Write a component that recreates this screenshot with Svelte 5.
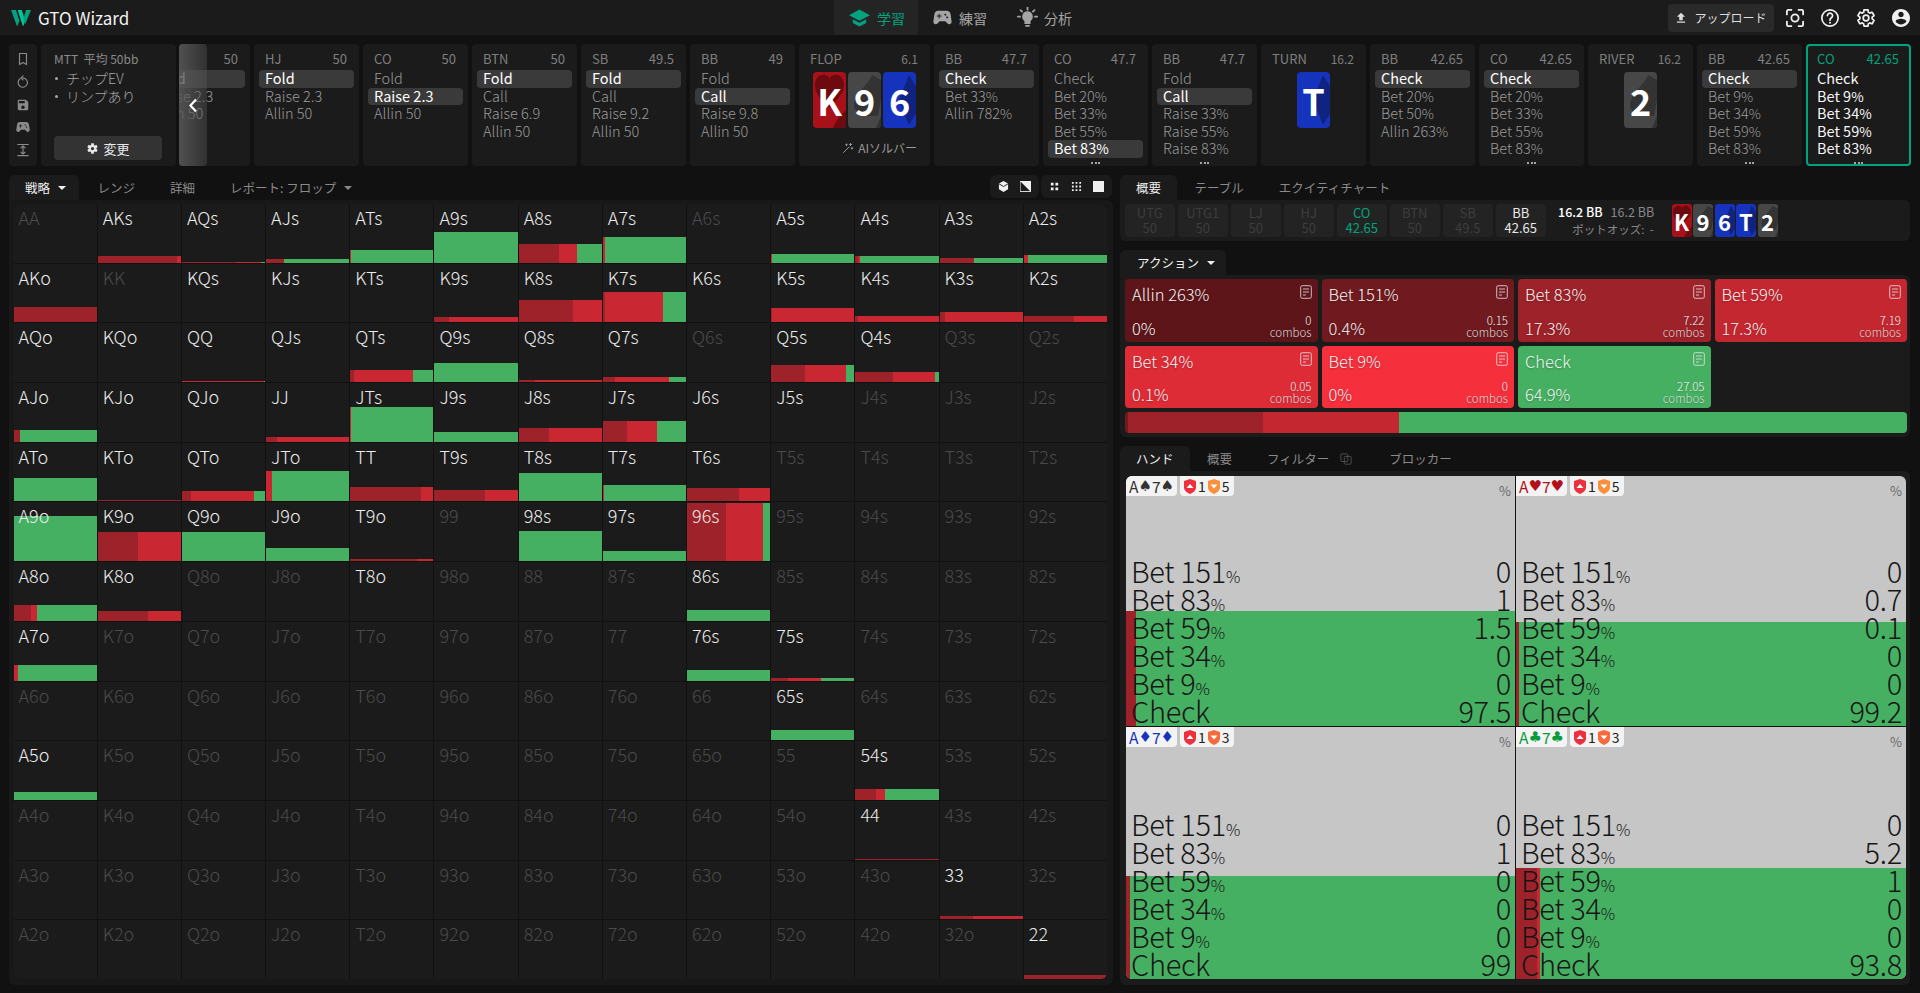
<script>
  const ranks = 'AKQJT98765432'.split('');
  const bars = {
    AKs:[7,95,5,0],AQs:[1,65,30,5],AJs:[4,21,0,79],ATs:[13,0,1,99],A9s:[31,0,0,100],A8s:[19,48,22,30],A7s:[26,0,2,98],A5s:[9,0,1,99],A4s:[7,3,2,95],A3s:[5,41,0,59],A2s:[8,0,5,95],
    AKo:[15,100,0,0],K9s:[5,17,83,0],K8s:[22,65,35,0],K7s:[30,2,70,28],K5s:[14,1,99,0],K4s:[6,3,97,0],K3s:[10,6,94,0],K2s:[6,60,40,0],
    QQ:[1,0,99,1],QTs:[12,5,71,24],Q9s:[19,0,0,100],Q8s:[2,20,80,0],Q7s:[5,15,65,20],Q5s:[17,41,49,10],Q4s:[10,45,51,4],
    AJo:[12,8,0,92],JJ:[5,13,87,0],JTs:[35,0,1,99],J9s:[10,0,0,100],J8s:[14,36,64,0],J7s:[21,29,36,35],
    ATo:[23,0,1,99],KTo:[1,100,0,0],QTo:[10,11,76,13],JTo:[30,0,7,93],TT:[14,85,15,0],T9s:[11,61,39,0],T8s:[28,0,0,100],T7s:[16,0,1,99],T6s:[13,63,37,0],
    A9o:[45,0,0,100],K9o:[29,49,51,0],Q9o:[29,0,0,100],J9o:[13,0,0,100],T9o:[2,80,20,0],'98s':[30,0,0,100],'97s':[10,0,0,100],'96s':[58,47,44,9],
    A8o:[16,21,7,72],K8o:[10,61,39,0],'86s':[11,0,0,100],
    A7o:[16,0,5,95],'76s':[11,0,0,100],'75s':[3,20,40,40],
    '65s':[10,0,0,100],A5o:[8,0,0,100],'54s':[11,25,10,65],'44':[1,100,0,0],'33':[3,40,60,0],'22':[4,100,0,0]
  };
  const active = new Set(['KQs','KJs','KTs','K6s','AQo','KQo','QJs','KJo','QJo','J6s','J5s','T8o']);
  const cells = [];
  ranks.forEach((a, i) => ranks.forEach((b, j) => {
    const label = i === j ? a + b : i < j ? a + b + 's' : b + a + 'o';
    const bar = bars[label];
    cells.push({ label, bar, dim: !bar && !active.has(label) });
  }));

  const splitPct = (t) => t.endsWith('%') ? [t.slice(0, -1), '%'] : [t, ''];
  const nodes = [
    { pos:'', stack:'50', rows:['Fold','Raise 2.3','Allin 50'], sel:[0], cut:true },
    { pos:'HJ', stack:'50', rows:['Fold','Raise 2.3','Allin 50'], sel:[0] },
    { pos:'CO', stack:'50', rows:['Fold','Raise 2.3','Allin 50'], sel:[1] },
    { pos:'BTN', stack:'50', rows:['Fold','Call','Raise 6.9','Allin 50'], sel:[0] },
    { pos:'SB', stack:'49.5', rows:['Fold','Call','Raise 9.2','Allin 50'], sel:[0] },
    { pos:'BB', stack:'49', rows:['Fold','Call','Raise 9.8','Allin 50'], sel:[1] },
    { street:'FLOP', stack:'6.1', cards:[['K','h'],['9','s'],['6','d']], ai:true },
    { pos:'BB', stack:'47.7', rows:['Check','Bet 33%','Allin 782%'], sel:[0] },
    { pos:'CO', stack:'47.7', rows:['Check','Bet 20%','Bet 33%','Bet 55%','Bet 83%'], sel:[4], more:true },
    { pos:'BB', stack:'47.7', rows:['Fold','Call','Raise 33%','Raise 55%','Raise 83%'], sel:[1], more:true },
    { street:'TURN', stack:'16.2', cards:[['T','d']] },
    { pos:'BB', stack:'42.65', rows:['Check','Bet 20%','Bet 50%','Allin 263%'], sel:[0] },
    { pos:'CO', stack:'42.65', rows:['Check','Bet 20%','Bet 33%','Bet 55%','Bet 83%'], sel:[0], more:true },
    { street:'RIVER', stack:'16.2', cards:[['2','s']] },
    { pos:'BB', stack:'42.65', rows:['Check','Bet 9%','Bet 34%','Bet 59%','Bet 83%'], sel:[0], more:true },
    { pos:'CO', stack:'42.65', rows:['Check','Bet 9%','Bet 34%','Bet 59%','Bet 83%'], sel:[], more:true, current:true }
  ];
  const seats = [['UTG','50'],['UTG1','50'],['LJ','50'],['HJ','50'],['CO','42.65','on'],['BTN','50'],['SB','49.5'],['BB','42.65','me']];
  const board = [['K','h'],['9','s'],['6','d'],['T','d'],['2','s']];
  const actions = [
    ['Allin 263%','0%','0','a1'],['Bet 151%','0.4%','0.15','a2'],['Bet 83%','17.3%','7.22','a3'],['Bet 59%','17.3%','7.19','a4'],
    ['Bet 34%','0.1%','0.05','a5'],['Bet 9%','0%','0','a6'],['Check','64.9%','27.05','a7']
  ];
  const stack = [['a2',0.4],['a3',17.3],['a4',17.3],['a5',0.1],['a7',64.9]];
  const lines = ['Bet 151%','Bet 83%','Bet 59%','Bet 34%','Bet 9%','Check'];
  const hands = [
    { r:'A', k:'7', suit:'♠', tone:'ts', up:1, down:5, warm:false, vals:['0','1','1.5','0','0','97.5'], h:115, d:10, m:0 },
    { r:'A', k:'7', suit:'♥', tone:'th', up:1, down:5, warm:false, vals:['0','0.7','0.1','0','0','99.2'], h:104, d:3, m:0 },
    { r:'A', k:'7', suit:'♦', tone:'td', up:1, down:3, warm:true, vals:['0','1','0','0','0','99'], h:103, d:4, m:0 },
    { r:'A', k:'7', suit:'♣', tone:'tc', up:1, down:3, warm:true, vals:['0','5.2','1','0','0','93.8'], h:111, d:21, m:3 }
  ];
  const gear = 'M19.14 12.94c.04-.3.06-.61.06-.94 0-.32-.02-.64-.07-.94l2.03-1.58c.18-.14.23-.41.12-.61l-1.92-3.32c-.12-.22-.37-.29-.59-.22l-2.39.96c-.5-.38-1.03-.7-1.62-.94L14.4 2.81c-.04-.24-.24-.41-.48-.41h-3.84c-.24 0-.43.17-.47.41L9.25 5.35c-.59.24-1.13.57-1.62.94l-2.39-.96c-.22-.08-.47 0-.59.22L2.74 8.87c-.12.21-.08.47.12.61l2.03 1.58c-.05.3-.09.63-.09.94s.02.64.07.94l-2.03 1.58c-.18.14-.23.41-.12.61l1.92 3.32c.12.22.37.29.59.22l2.39-.96c.5.38 1.03.7 1.62.94l.36 2.54c.05.24.24.41.48.41h3.84c.24 0 .44-.17.47-.41l.36-2.54c.59-.24 1.13-.56 1.62-.94l2.39.96c.22.08.47 0 .59-.22l1.92-3.32c.12-.22.07-.47-.12-.61l-2.01-1.58z';
  const pad = 'M21.58 16.09l-1.09-7.66C20.21 6.46 18.52 5 16.53 5H7.47C5.48 5 3.79 6.46 3.51 8.43l-1.09 7.66C2.2 17.63 3.39 19 4.94 19c.68 0 1.32-.27 1.8-.75L9 16h6l2.25 2.25c.48.48 1.13.75 1.8.75 1.56 0 2.75-1.37 2.53-2.91zM11 11H9v2H8v-2H6v-1h2V8h1v2h2v1zm4-1c-.55 0-1-.45-1-1s.45-1 1-1 1 .45 1 1-.45 1-1 1zm2 3c-.55 0-1-.45-1-1s.45-1 1-1 1 .45 1 1-.45 1-1 1z';
</script>

{#snippet suitArt(s)}
  <svg class="art" viewBox="0 0 33 56" preserveAspectRatio="none" aria-hidden="true">
    {#if s === 'h'}
      <path d="M16 36 C8 27 2 22 2 13 C2 6 7 2 12 3 C15 3.500 16 5 16.500 7 C17 5 19 3 22 3 C27 2 31 7 31 13 C31 22 24 27 16 36Z"/>
      <path d="M33 56 L20 56 C22 50 27 44 33 38Z"/>
    {:else if s === 's'}
      <path d="M24 3 C21 12 6 22 6 33 C6 41 14 42 20 38 C19 41 17 43 15 44 L30 44 L33 28 L33 8Z"/>
      <path d="M33 44 L28 56 L33 56Z"/>
    {:else}
      <path d="M26 3 L33 14 L33 42 L26 53 L16 28Z"/>
    {/if}
  </svg>
{/snippet}

{#snippet shield(fill, up)}
  <svg class="shield" viewBox="0 0 12 15" aria-hidden="true">
    <path d="M6 0 L12 2 L12 8.500 C12 11.500 9 13.700 6 15 C3 13.700 0 11.500 0 8.500 L0 2Z" fill={fill}/>
    {#if up}<path d="M2.500 9 L6 5 L9.500 9Z" fill="#fff"/>{:else}<path d="M2.500 5.500 L9.500 5.500 L6 9.500Z" fill="#fff"/>{/if}
  </svg>
{/snippet}

{#snippet note()}
  <svg class="note" viewBox="0 0 12 14" aria-hidden="true">
    <rect x="0.700" y="0.700" width="10.600" height="12.600" rx="1.500"/>
    <path d="M3 4H9M3 7H9M3 10H6"/>
  </svg>
{/snippet}

<div class="app">
  <header class="top">
    <div class="brand">
      <svg class="logo" viewBox="0 0 24 20" aria-hidden="true">
        <path d="M0 1H6L10 14L8 20H7Z" fill="#00a37e"/>
        <path d="M8 1H13L17 14L15 20H14Z" fill="#00c49a"/>
        <path d="M24 1H18L15 11L17 18Z" fill="#00a37e"/>
      </svg>
      <span>GTO Wizard</span>
    </div>
    <nav class="nav">
      <div class="navitem on">
        <svg viewBox="1 3 22 18" aria-hidden="true"><path d="M5 13.180v4L12 21l7-3.820v-4L12 17l-7-3.820zM12 3L1 9l11 6 11-6L12 3z"/></svg>
        <span>学習</span>
      </div>
      <div class="navitem">
        <svg class="wide" viewBox="2 5 20 14" aria-hidden="true"><path d={pad}/></svg>
        <span>練習</span>
      </div>
      <div class="navitem bulb">
        <svg viewBox="0 0 24 24" aria-hidden="true">
          <path d="M9.500 22.500h5v-1.800h-5zM12 5a6 6 0 0 0-3.500 10.900V19.500h7v-3.600A6 6 0 0 0 12 5z"/>
          <path class="rays" d="M12 0.500v2.500M4 3.500l1.800 1.800M20 3.500l-1.800 1.800M1 11h2.500M20.500 11H23"/>
        </svg>
        <span>分析</span>
      </div>
    </nav>
    <div class="tools">
      <button class="upload">
        <svg viewBox="0 0 24 24" aria-hidden="true"><path d="M9 16h6v-6h4l-7-7-7 7h4zm-4 2h14v2H5z"/></svg>
        <span>アップロード</span>
      </button>
      <svg class="tool" viewBox="2 2 20 20" aria-hidden="true"><path class="ln" d="M3 8V4.500A1.500 1.500 0 0 1 4.500 3H8M16 3h3.500A1.500 1.500 0 0 1 21 4.500V8M21 16v3.500a1.500 1.500 0 0 1-1.500 1.500H16M8 21H4.500A1.500 1.500 0 0 1 3 19.500V16"/><circle class="ln" cx="12" cy="12" r="4"/></svg>
      <svg class="tool" viewBox="1.500 1.500 21 21" aria-hidden="true"><circle class="ln" cx="12" cy="12" r="9.500"/><path class="ln" d="M9 9.200a3 3 0 1 1 4.600 2.600c-1 .6-1.600 1.300-1.600 2.700"/><circle cx="12" cy="17.500" r="1.200"/></svg>
      <svg class="tool" viewBox="1.500 1.500 21 21" aria-hidden="true"><path class="ln" d={gear}/><circle class="ln" cx="12" cy="12" r="3.300"/></svg>
      <svg class="tool" viewBox="2 2 20 20" aria-hidden="true"><path d="M12 2C6.480 2 2 6.480 2 12s4.480 10 10 10 10-4.480 10-10S17.520 2 12 2zm0 3c1.660 0 3 1.340 3 3s-1.340 3-3 3-3-1.340-3-3 1.340-3 3-3zm0 14.200c-2.500 0-4.710-1.280-6-3.220.03-1.990 4-3.080 6-3.080 1.990 0 5.970 1.090 6 3.080-1.290 1.940-3.500 3.220-6 3.220z"/></svg>
    </div>
  </header>

  <section class="strip">
    <div class="rail">
      <svg viewBox="0 0 24 24" aria-hidden="true"><path class="ln" d="M6 2.500h12v19l-6-3.500-6 3.500z"/></svg>
      <svg viewBox="0 0 24 24" aria-hidden="true"><path class="ln" d="M7 6.500a8 8 0 1 0 5-1.500M12 1.500l-3.500 3.500L12 8.500"/></svg>
      <svg viewBox="0 0 24 24" aria-hidden="true"><path d="M17 3H5c-1.110 0-2 .9-2 2v14c0 1.100.89 2 2 2h14c1.100 0 2-.9 2-2V7l-4-4zm-5 16c-1.660 0-3-1.340-3-3s1.340-3 3-3 3 1.340 3 3-1.340 3-3 3zm3-10H5V5h10v4z"/></svg>
      <svg viewBox="2 5 20 14" aria-hidden="true"><path d={pad}/></svg>
      <svg viewBox="0 0 24 24" aria-hidden="true"><path class="ln" d="M3 2.500h18M3 21.500h18M12 5v14M8.500 8.500L12 5l3.500 3.500M8.500 15.500L12 19l3.500-3.500"/></svg>
    </div>
    <div class="mtt">
      <div class="mtt-title">MTT&nbsp; 平均 50bb</div>
      <ul>
        <li>チップEV</li>
        <li>リンプあり</li>
      </ul>
      <button class="change">
        <svg viewBox="0 0 24 24" aria-hidden="true"><path d={gear}/><circle cx="12" cy="12" r="3" fill="#333"/></svg>
        <span>変更</span>
      </button>
    </div>
    <div class="tree">
      {#each nodes as n}
        <div class="node" class:cut={n.cut} class:flop={n.ai} class:current={n.current}>
          <div class="node-head">
            <span>{n.pos ?? n.street}</span>
            <span class:small={n.street}>{n.stack}</span>
          </div>
          {#if n.rows}
            <div class="rows">
              {#each n.rows as r, i}
                <div class="row" class:sel={n.sel.includes(i)}>{splitPct(r)[0]}<small>{splitPct(r)[1]}</small></div>
              {/each}
            </div>
            {#if n.more}<div class="dots"><i></i><i></i><i></i></div>{/if}
          {:else}
            <div class="cards">
              {#each n.cards as c}
                <div class="pcard {c[1]}">{@render suitArt(c[1])}<b>{c[0]}</b></div>
              {/each}
            </div>
            {#if n.ai}
              <div class="ai">
                <svg viewBox="0 0 24 24" aria-hidden="true"><path class="ln" d="M3 21L14 10M17 3v4M15 5h4M20 11v3M18.500 12.500h3M9 4v3M7.500 5.500h3"/></svg>
                <span>AIソルバー</span>
              </div>
            {/if}
          {/if}
        </div>
      {/each}
      <div class="back">
        <svg viewBox="0 0 12 20" aria-hidden="true"><path d="M9.500 3L3 10l6.500 7"/></svg>
      </div>
    </div>
  </section>

  <main class="main">
    <section class="left">
      <div class="tabbar">
        <div class="tab on">戦略<em></em></div>
        <div class="tab">レンジ</div>
        <div class="tab">詳細</div>
        <div class="tab">レポート: フロップ<em></em></div>
        <div class="views">
          <div class="vgroup">
            <svg viewBox="0 0 12 12" aria-hidden="true"><path d="M6 0L11 2.800V9L6 12L1 9V2.800Z"/><path class="cut-ln" d="M1 3L6 6L11 3"/></svg>
            <svg viewBox="0 0 12 12" aria-hidden="true"><path d="M0 0H12V12Z"/><path class="ln thin" d="M.5.500h11v11H.5z"/></svg>
          </div>
          <div class="vgroup">
            <svg viewBox="0 0 12 12" aria-hidden="true"><path d="M2 2H5V5H2ZM7 2H10V5H7ZM2 7H5V10H2ZM7 7H10V10H7Z"/></svg>
            <svg viewBox="0 0 12 12" aria-hidden="true"><path d="M1 1H3V3H1ZM5 1H7V3H5ZM9 1H11V3H9ZM1 5H3V7H1ZM5 5H7V7H5ZM9 5H11V7H9ZM1 9H3V11H1ZM5 9H7V11H5ZM9 9H11V11H9Z"/></svg>
            <svg viewBox="0 0 12 12" aria-hidden="true"><path d="M0 0H12V12H0Z"/></svg>
          </div>
        </div>
      </div>
      <div class="panel">
        <div class="grid">
          {#each cells as c}
            <div class="cell" class:dim={c.dim}>
              {#if c.bar}
                <div class="bar" style="height:{c.bar[0]}px">
                  <i class="dark" style="width:{c.bar[1]}%"></i><i class="red" style="width:{c.bar[2]}%"></i><i class="green" style="width:{c.bar[3]}%"></i>
                </div>
              {/if}
              <span>{c.label}</span>
            </div>
          {/each}
        </div>
      </div>
    </section>

    <section class="right">
      <div class="tabbar">
        <div class="tab on">概要</div>
        <div class="tab">テーブル</div>
        <div class="tab">エクイティチャート</div>
      </div>
      <div class="seatbar">
        {#each seats as s}
          <div class="seat {s[2] ?? ''}"><span>{s[0]}</span><span>{s[1]}</span></div>
        {/each}
        <div class="pot">
          <div><b>16.2 BB</b><span>16.2 BB</span></div>
          <p>ポットオッズ: &nbsp;-</p>
        </div>
        <div class="board">
          {#each board as c}
            <div class="pcard mini {c[1]}">{@render suitArt(c[1])}<b>{c[0]}</b></div>
          {/each}
        </div>
      </div>

      <div class="tabbar short">
        <div class="tab on wide-tab">アクション<em></em></div>
      </div>
      <div class="actions">
        <div class="agrid">
          {#each actions as a}
            <div class="acard {a[3]}">
              <div class="a-top"><span>{a[0]}</span>{@render note()}</div>
              <div class="a-bot">
                <span class="a-pct">{a[1]}</span>
                <span class="a-c"><b>{a[2]}</b><small>combos</small></span>
              </div>
            </div>
          {/each}
        </div>
        <div class="stack">
          {#each stack as s}<i class={s[0]} style="width:{s[1]}%"></i>{/each}
        </div>
      </div>

      <div class="tabbar short">
        <div class="tab on">ハンド</div>
        <div class="tab">概要</div>
        <div class="tab">フィルター
          <svg class="copy" viewBox="0 0 14 14" aria-hidden="true"><rect x="1" y="1" width="8" height="9" rx="1"/><rect x="5" y="4" width="8" height="9" rx="1"/></svg>
        </div>
        <div class="tab">ブロッカー</div>
      </div>
      <div class="handpanel">
        <div class="hgrid">
          {#each hands as h}
            <div class="hand">
              <div class="fill" style="height:{h.h}px">
                <i class="dark" style="width:{h.d}px"></i><i class="red" style="width:{h.m}px"></i><i class="green grow"></i>
              </div>
              <div class="badges">
                <div class="badge {h.tone}">{h.r}<span>{h.suit}</span>{h.k}<span>{h.suit}</span></div>
                <div class="badge eq">
                  {@render shield('#ee2f3d', true)}<span>{h.up}</span>
                  {@render shield(h.warm ? '#f66a3c' : '#fb8f3c', false)}<span>{h.down}</span>
                </div>
                <div class="hpct">%</div>
              </div>
              <div class="hlines">
                {#each lines as l, i}
                  <div class="hline">
                    <span>{splitPct(l)[0]}<small>{splitPct(l)[1]}</small></span>
                    <span>{h.vals[i]}</span>
                  </div>
                {/each}
              </div>
            </div>
          {/each}
        </div>
      </div>
    </section>
  </main>
</div>

<style>
  :global(body) { margin: 0; background: #111; }
  .app {
    width: 1920px; height: 993px; overflow: hidden; background: #111; color: #fff;
    font-family: "Noto Sans CJK JP", "Noto Sans", sans-serif; display: flex; flex-direction: column;
  }
  svg { display: block; fill: currentColor; }
  svg .ln, svg.ln { fill: none; stroke: currentColor; stroke-width: 2; stroke-linecap: round; stroke-linejoin: round; }
  button { font-family: inherit; border: 0; color: inherit; padding: 0; }

  .top { height: 35px; background: #1b1b1b; display: flex; align-items: center; position: relative; flex: none; }
  .brand { display: flex; align-items: center; gap: 7px; margin-left: 11px; font-size: 17px; font-weight: 400; color: #f2f2f2; width: 823px; }
  .logo { width: 20px; height: 17px; }
  .nav { display: flex; height: 35px; }
  .navitem { display: flex; align-items: center; gap: 7px; font-size: 14px; color: #a5a5a5; padding: 0 15px; }
  .navitem svg { width: 21px; height: 18px; }
  .navitem svg.wide { width: 19px; height: 15px; }
  .navitem.on { background: #242424; color: #00a37e; padding-right: 13px; }
  .navitem.bulb { gap: 6px; }
  .navitem.bulb svg { height: 21px; }
  .rays { fill: none; stroke: currentColor; stroke-width: 2; stroke-linecap: round; }
  .tools { margin-left: auto; display: flex; align-items: center; margin-right: 10px; }
  .upload { height: 28px; width: 106px; background: #2a2a2a; border-radius: 4px; display: flex; align-items: center; justify-content: center; gap: 6px; font-size: 12px; color: #ddd; margin-right: 12px; }
  .upload svg { width: 14px; height: 14px; }
  .tool { width: 18px; height: 18px; margin-right: 17.500px; color: #f0f0f0; }
  .tool:last-child { margin-right: 0; }

  .strip { display: flex; height: 122px; margin: 9px 9px 0; gap: 4px; flex: none; }
  .rail { width: 28px; background: #1b1b1b; border-radius: 4px; display: flex; flex-direction: column; align-items: center; justify-content: space-between; padding: 8px 0 9px; box-sizing: border-box; color: #8a8a8a; }
  .rail svg { width: 14px; height: 14px; }
  .mtt { width: 135px; background: #1b1b1b; border-radius: 4px; padding: 7px 13px 0; box-sizing: border-box; position: relative; margin-right: -1px; }
  .mtt-title { font-size: 12px; color: #8a8a8a; line-height: 16px; }
  .mtt ul { margin: 3px 0 0; padding: 0; list-style: none; font-size: 14px; font-weight: 300; color: #a5a5a5; line-height: 17.500px; }
  .mtt li { display: flex; align-items: center; }
  .mtt li::before { content: ""; width: 3px; height: 3px; border-radius: 50%; background: #a5a5a5; margin: 0 8px 0 1px; flex: none; }
  .change { position: absolute; left: 13px; right: 14px; bottom: 6px; height: 24px; background: #333; border-radius: 4px; font-size: 13px; display: flex; align-items: center; justify-content: center; gap: 4px; color: #e8e8e8; }
  .change svg { width: 13px; height: 13px; }

  .tree { display: flex; gap: 4px; flex: 1; overflow: hidden; position: relative; }
  .node { width: 105px; flex: none; background: #1b1b1b; border-radius: 4px; box-sizing: border-box; padding: 6px 5px 0; overflow: hidden; }
  .node.cut { margin-left: -34px; }
  .node.flop { width: 131px; }
  .node.current { border: 2px solid #00a37e; padding: 4px 3px 0; }
  .node-head { display: flex; justify-content: space-between; padding: 0 7px 0 6px; height: 18px; line-height: 18px; font-size: 13px; color: #7f7f7f; }
  .node-head .small { font-size: 12px; }
  .current .node-head { color: #00a37e; }
  .rows { margin-top: 2px; }
  .row { height: 17.500px; line-height: 16px; padding-left: 6px; font-size: 14.500px; font-weight: 300; color: #9a9a9a; border-radius: 4px; white-space: nowrap; }
  .row small { font-size: 13.500px; }
  .row.sel { background: #3a3a3a; color: #fff; font-weight: 400; }
  .current .row { color: #f6f6f6; font-weight: 400; }
  .dots { display: flex; gap: 1.500px; justify-content: center; margin-top: 4px; }
  .dots i { width: 2px; height: 2px; background: #a5a5a5; }
  .cards { display: flex; justify-content: center; gap: 2px; margin-top: 4px; height: 56px; }
  .pcard { width: 33px; height: 56px; border-radius: 4px; position: relative; overflow: hidden; display: flex; align-items: center; justify-content: center; }
  .pcard b { position: relative; font-size: 36px; font-weight: 700; color: #fff; line-height: 1; }
  .pcard.h { background: #a8101a; }
  .pcard.s { background: #474747; }
  .pcard.d { background: #1533bd; }
  .art { position: absolute; inset: 0; width: 100%; height: 100%; }
  .h .art { fill: #6d0a10; }
  .s .art { fill: #333; }
  .d .art { fill: #0f2480; }
  .ai { display: flex; align-items: center; justify-content: flex-end; gap: 4px; font-size: 12px; color: #9a9a9a; margin: 11px 8px 0 0; }
  .ai svg { width: 12px; height: 12px; }
  .back { position: absolute; left: 0; top: 0; bottom: 0; width: 28px; border-radius: 4px; background: linear-gradient(90deg, rgba(88,88,88,.88), rgba(85,85,85,.38)); display: flex; align-items: center; justify-content: center; }
  .back svg { width: 12px; height: 17px; fill: none; stroke: #fff; stroke-width: 2.500; }

  .main { display: flex; gap: 7px; margin: 9px 10px 0 9px; flex: 1; min-height: 0; }
  .left { width: 1104px; flex: none; display: flex; flex-direction: column; }
  .right { width: 790px; flex: none; display: flex; flex-direction: column; }
  .tabbar { display: flex; height: 25px; align-items: stretch; font-size: 12.500px; color: #8a8a8a; flex: none; }
  .tab { padding: 0 17.500px; display: flex; align-items: center; border-radius: 6px 6px 0 0; }
  .tab.on { background: #1b1b1b; color: #f0f0f0; padding: 0 16px; }
  .tab.on + .tab { margin-left: 1px; }
  .right > .tabbar .tab.on + .tab { margin-left: 0; }
  .tab.on em { margin-right: -3px; }
  .wide-tab { padding: 0 14px 0 17px !important; }
  .tab em { width: 0; height: 0; border: 4px solid transparent; border-top: 4px solid currentColor; border-bottom: 0; margin-left: 8px; }
  .views { margin-left: auto; display: flex; gap: 2px; margin-right: 1px; height: 23px; }
  .vgroup { background: #1b1b1b; border-radius: 6px; display: flex; align-items: center; gap: 11px; padding: 0 8px; color: #f0f0f0; }
  .vgroup svg { width: 11px; height: 11px; }
  .cut-ln { fill: none; stroke: #1b1b1b; stroke-width: 1; }
  .ln.thin { stroke-width: 1; }
  .panel { background: #181818; border-radius: 0 6px 6px 6px; padding: 4px 6px 6px 4.500px; flex: none; height: 785px; box-sizing: border-box; }
  .grid { display: grid; grid-template-columns: repeat(13, 1fr); grid-template-rows: repeat(13, 1fr); gap: 1px; background: #111; height: 775px; border-radius: 6px; overflow: hidden; }
  .cell { background: #1b1b1b; position: relative; overflow: hidden; min-width: 0; }
  .cell span { position: absolute; left: 5px; top: 0; font-size: 18px; font-weight: 300; line-height: 26px; color: #ececec; }
  .cell.dim span { color: #4a4a4a; }
  .bar { position: absolute; left: 0; right: 0; bottom: 0; display: flex; }
  .bar i { display: block; height: 100%; }
  .dark { background: #9e2229; }
  .red { background: #c92833; }
  .green { background: #46b062; }

  .seatbar { height: 41px; background: #1b1b1b; border-radius: 0 6px 6px 6px; display: flex; padding: 4px 5px; box-sizing: border-box; gap: 3.500px; flex: none; margin-bottom: 9px; }
  .seat { width: 49.500px; height: 33px; background: #232323; border-radius: 4px; display: flex; flex-direction: column; align-items: center; font-size: 13px; line-height: 15px; color: #3d3d3d; padding-top: 1px; box-sizing: border-box; }
  .seat.on { color: #00a37e; }
  .seat.me { color: #e8e8e8; }
  .pot { width: 110px; margin-left: 9px; font-size: 13px; line-height: 16px; color: #888; }
  .pot div { display: flex; gap: 8px; margin-top: 0; font-size: 12.500px; }
  .pot b { color: #fff; font-weight: 500; }
  .pot p { margin: 1px 0 0; text-align: center; font-size: 11.500px; line-height: 16px; }
  .board { display: flex; gap: 1.500px; margin-left: 0; }
  .pcard.mini { width: 20px; height: 33px; border-radius: 3px; }
  .pcard.mini b { font-size: 22px; }

  .actions { background: #1b1b1b; border-radius: 0 6px 6px 6px; padding: 4px 3px 4px 5px; height: 162px; box-sizing: border-box; flex: none; margin-bottom: 9px; }
  .agrid { display: grid; grid-template-columns: repeat(4, 1fr); grid-template-rows: 63px 62px; gap: 4px; }
  .acard { border-radius: 4px; padding: 4px 6px 4px 7px; display: flex; flex-direction: column; justify-content: space-between; box-sizing: border-box; color: #f4f4f4; text-shadow: 0 1px 2px rgba(0,0,0,.25); font-weight: 300; }
  .a-top { display: flex; justify-content: space-between; font-size: 16.500px; line-height: 22px; }
  .note { width: 12px; height: 14px; fill: none; stroke: #e6e6e6; stroke-width: 1; opacity: .8; margin-top: 2px; }
  .a-bot { display: flex; justify-content: space-between; align-items: flex-end; }
  .a-pct { font-size: 16.500px; line-height: 20px; }
  .a-c { display: flex; flex-direction: column; align-items: flex-end; font-size: 11.500px; line-height: 12px; }
  .a-c b { font-weight: 300; }
  .a-c small { font-size: 11.500px; color: #dcdcdc; }
  .a1 { background: #5e1519; }
  .a2 { background: #701a1f; }
  .a3 { background: #9e2229; }
  .a4 { background: #c42730; }
  .a5 { background: #dd2c36; }
  .a6 { background: #f52f3c; }
  .a7 { background: #46b062; }
  .stack { display: flex; height: 21px; margin-top: 4px; border-radius: 4px; overflow: hidden; }
  .stack i { display: block; height: 100%; }

  .short { flex: none; }
  .copy { width: 12px; height: 12px; margin: 0 2px 0 11px; fill: none; stroke: #555; stroke-width: 1; }
  .handpanel { background: #1b1b1b; border-radius: 0 6px 6px 6px; padding: 5px 4px 6px 6px; height: 514px; box-sizing: border-box; flex: none; }
  .hgrid { display: grid; grid-template-columns: 389px 390px; grid-template-rows: 250px 252px; column-gap: 1px; row-gap: 1px; background: #111; border-radius: 6px; overflow: hidden; height: 503px; }
  .hand { background: #c6c6c6; position: relative; color: #161616; display: flex; flex-direction: column; justify-content: space-between; overflow: hidden; }
  .fill { position: absolute; left: 0; right: 0; bottom: 0; display: flex; }
  .fill i { display: block; height: 100%; flex: none; }
  .fill .grow { flex: 1; }
  .badges { display: flex; gap: 3px; position: relative; height: 20px; }
  .badge { height: 20px; background: #f3f3f3; border-radius: 0 0 4px 0; display: flex; align-items: center; font-size: 15.500px; padding: 0 3px; box-sizing: border-box; }
  .badge + .badge { border-radius: 0 0 4px 4px; padding: 0 4px; }
  .badge span { font-family: "DejaVu Sans", sans-serif; font-size: 15px; }
  .eq span { font-family: inherit; font-size: 14px; padding: 0 2px; color: #222; }
  .eq span:last-child { padding-right: 0; }
  .ts { color: #333; }
  .th { color: #b3101b; }
  .td { color: #1533bd; }
  .tc { color: #0a9b3c; }
  .shield { width: 12px; height: 15px; flex: none; }
  .hpct { position: absolute; right: 4px; top: 6px; font-size: 13px; color: #666; line-height: 18px; }
  .hlines { position: relative; padding: 0 4px 2px 5px; }
  .hline { display: flex; justify-content: space-between; height: 28px; line-height: 28px; font-size: 29px; font-weight: 300; letter-spacing: -0.3px; }
  .hline small { font-size: 16px; }
</style>
